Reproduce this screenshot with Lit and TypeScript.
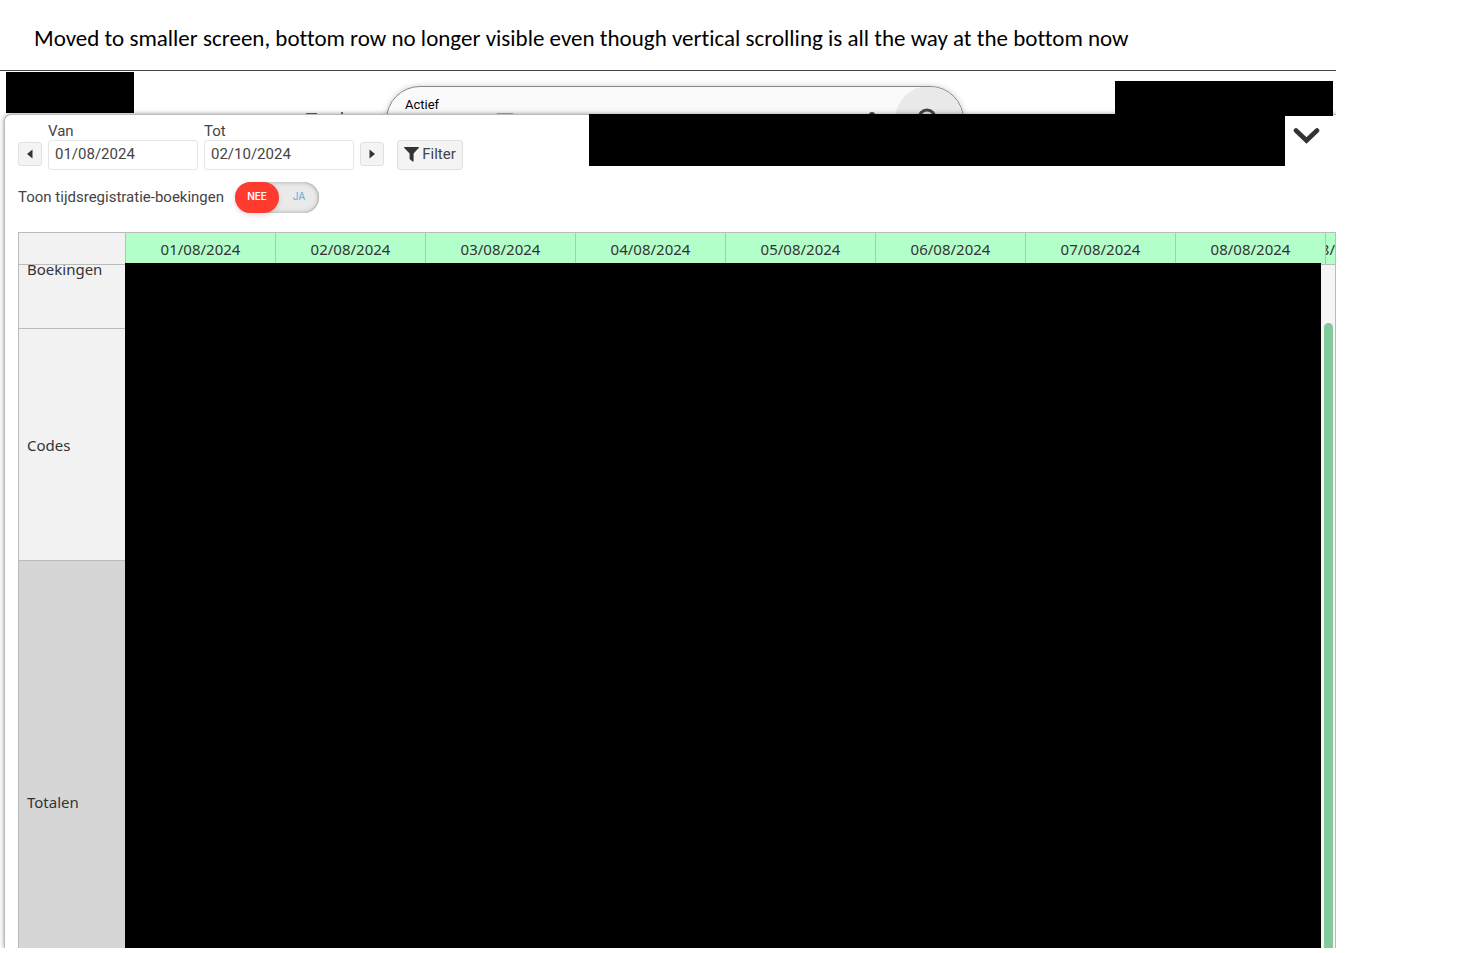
import { LitElement, html, css } from "lit";
import { customElement, property, state } from "lit/decorators.js";

@customElement("yes-no-switch")
class YesNoSwitch extends LitElement {
  @property({ type: Boolean }) checked = false;

  static styles = css`
    :host {
      display: block;
    }
    .row {
      display: flex;
      align-items: flex-start;
      gap: 11px;
      color: #444;
      font-size: 15px;
      line-height: 30px;
      cursor: pointer;
    }
    .switch {
      position: relative;
      display: grid;
      grid-template-columns: 44px 40px;
      align-items: center;
      height: 31px;
      border-radius: 16px;
      background: #eaeaea;
      box-shadow: inset 0 0 5px #aaa, inset -1px 0 1px #bbb;
      font-family: Inter, Roboto, sans-serif;
      font-size: 10px;
      font-weight: 500;
      text-align: center;
      color: #74b4dc;
    }
    .box {
      position: absolute;
      inset: 0;
      width: 100%;
      height: 100%;
      margin: 0;
      opacity: 0;
      cursor: pointer;
    }
    .side {
      line-height: 29px;
      height: 31px;
      border-radius: 16px;
    }
    .on {
      background: #ff3b30;
      color: #fff;
      font-weight: 600;
      box-shadow: 0 2px 5px rgba(0, 0, 0, 0.15);
    }
  `;

  render() {
    return html`
      <label class="row">
        <span><slot></slot></span>
        <span class="switch">
          <span class="side ${this.checked ? "" : "on"}">NEE</span>
          <span class="side ${this.checked ? "on" : ""}">JA</span>
          <input
            class="box"
            type="checkbox"
            aria-label="Toon tijdsregistratie-boekingen"
            .checked=${this.checked}
            @change=${(e: Event) => (this.checked = (e.target as HTMLInputElement).checked)}
          />
        </span>
      </label>
    `;
  }
}

@customElement("app-root")
class AppRoot extends LitElement {
  @state() private days = [1, 2, 3, 4, 5, 6, 7, 8].map((d) => `0${d}/08/2024`);

  static styles = css`
    :host {
      display: flex;
      flex-direction: column;
      box-sizing: border-box;
      height: 100vh;
      padding: 0 122px 5px 0;
      background: #fff;
      color: #333;
      font-family: Roboto, "Liberation Sans", sans-serif;
      overflow: hidden;
    }
    * {
      box-sizing: border-box;
    }
    .caption {
      margin: 0;
      padding: 22px 0 16px 34px;
      font: 400 23px/32px Carlito, Lato, sans-serif;
      font-variant-ligatures: none;
      color: #000;
      white-space: nowrap;
    }
    .capture {
      flex: 1;
      min-height: 0;
      display: flex;
      flex-direction: column;
      border-top: 1px solid #444;
      overflow: hidden;
    }
    .topbar {
      flex: none;
      display: flex;
      align-items: flex-start;
      height: 43px;
      padding: 1px 3px 0 6px;
    }
    .hidden {
      background: #000;
    }
    .brand {
      width: 128px;
      height: 41px;
    }
    .peek {
      display: block;
      width: 252px;
      height: 42px;
    }
    .search {
      display: flex;
      width: 578px;
      height: 68px;
      margin-top: 14px;
      border: 1px solid #888;
      border-radius: 34px;
      background: #fafafa;
      box-shadow: 0 0 6px rgba(0, 0, 0, 0.2);
      overflow: hidden;
    }
    .state {
      flex: 1;
      padding: 10px 0 0 18px;
      font-size: 13px;
      line-height: 16px;
      color: #000;
    }
    .glass {
      display: block;
      width: 468px;
      height: 66px;
    }
    .account {
      position: relative;
      z-index: 2;
      width: 218px;
      height: 35px;
      margin: 9px 0 0 auto;
    }
    .panel {
      position: relative;
      z-index: 1;
      flex: 1;
      min-height: 0;
      display: flex;
      flex-direction: column;
      margin-left: 4px;
      border: 1px solid #bbb;
      border-width: 1px 0 0 1px;
      border-radius: 7px 0 0 0;
      background: #fff;
      box-shadow: 0 0 5px rgba(0, 0, 0, 0.4);
    }
    .toolbar {
      display: flex;
      align-items: flex-start;
      padding-left: 13px;
      height: 66px;
    }
    .controls {
      display: flex;
      align-items: flex-end;
      gap: 6px;
      padding-top: 7px;
      color: #444;
      font-size: 15px;
    }
    .field {
      display: flex;
      flex-direction: column;
      line-height: 18px;
    }
    .date {
      width: 150px;
      height: 30px;
      padding: 0 6px 2px;
      border: 1px solid #e6e6e6;
      border-radius: 3px;
      background: #fff;
      color: #444;
      font: inherit;
    }
    .step,
    .filter {
      display: flex;
      align-items: center;
      justify-content: center;
      padding: 0;
      border: 1px solid #e0e0e0;
      border-radius: 3px;
      background: #f4f4f4;
      color: #444;
      font: inherit;
    }
    .step {
      width: 24px;
      height: 24px;
      margin-bottom: 4px;
    }
    .filter {
      gap: 3px;
      width: 66px;
      height: 30px;
      margin-left: 7px;
      padding-bottom: 2px;
    }
    .details {
      flex: 1;
      height: 52px;
      margin: -1px 0 0 126px;
    }
    .collapse {
      width: 51px;
      height: 41px;
      padding: 0 0 0 8px;
      border: 0;
      background: none;
      text-align: left;
    }
    .collapse svg {
      display: block;
    }
    .option {
      display: flex;
      padding: 1px 0 0 13px;
      margin-bottom: 19px;
    }
    .planning {
      flex: 1;
      min-height: 0;
      display: block;
      margin-left: 13px;
      border: 1px solid #bbb;
      border-bottom: 0;
      overflow: hidden;
      font: 400 15px/20px "Noto Sans", "Open Sans", sans-serif;
    }
    thead {
      display: block;
    }
    .days {
      display: flex;
      height: 32px;
      border-bottom: 1px solid #bbb;
      background: #b3ffc9;
    }
    .corner {
      flex: none;
      width: 106px;
      background: #f2f2f2;
    }
    .day {
      flex: none;
      width: 150px;
      padding: 6px 0 0;
      border-left: 1px solid #a9c9b3;
      font-weight: 400;
      text-align: center;
    }
    .rest {
      flex: 1;
      display: flex;
      justify-content: flex-end;
      min-width: 0;
      overflow: hidden;
    }
    tbody {
      display: grid;
      grid-template-columns: 106px 1fr 14px;
      grid-template-rows: 64px 232px 482px;
    }
    .line {
      display: contents;
    }
    .name {
      grid-column: 1;
      display: flex;
      align-items: center;
      padding: 0 0 0 8px;
      border-bottom: 1px solid #bbb;
      background: #f2f2f2;
      font-weight: 400;
      overflow: hidden;
    }
    .cut {
      align-items: flex-start;
      line-height: 8px;
    }
    .total {
      background: #d6d6d6;
    }
    .bookings {
      grid-area: 1 / 2 / 4 / 3;
      position: relative;
      margin-top: -2px;
      padding: 0;
    }
    .track {
      grid-area: 1 / 3 / 4 / 4;
      padding: 58px 2px 0 3px;
      background: #f5f5f5;
    }
    .thumb {
      height: 100%;
      border-radius: 5px;
      background: #84c99c;
    }
  `;

  render() {
    return html`
      <p class="caption">
        Moved to smaller screen, bottom row no longer visible even though vertical scrolling is all the way at the
        bottom now
      </p>
      <div class="capture">
        <header class="topbar">
          <div class="hidden brand"></div>
          <svg class="peek" viewBox="0 0 252 42" aria-hidden="true">
            <path d="M172 41h11v1h-11zM207 40h2v2h-2z" fill="#666" />
          </svg>
          <div class="search">
            <span class="state">Actief</span>
            <svg class="glass" viewBox="0 0 468 66" aria-hidden="true">
              <rect x="1" y="26" width="18" height="20" rx="2" fill="#84c99c" />
              <circle cx="434" cy="33" r="34" fill="#e9e9e9" />
              <circle cx="377" cy="28" r="3" fill="#444" />
              <circle cx="432" cy="31" r="8" fill="none" stroke="#444" stroke-width="3" />
            </svg>
          </div>
          <div class="hidden account"></div>
        </header>

        <main class="panel">
          <div class="toolbar">
            <div class="controls">
              <button class="step" aria-label="Vorige">
                <svg width="8" height="10" viewBox="0 0 8 10"><path d="M6.5 0.5v9L1 5z" fill="#333" /></svg>
              </button>
              <label class="field">Van<input class="date" type="text" .value=${"01/08/2024"} /></label>
              <label class="field">Tot<input class="date" type="text" .value=${"02/10/2024"} /></label>
              <button class="step" aria-label="Volgende">
                <svg width="8" height="10" viewBox="0 0 8 10"><path d="M1.5 0.5v9L7 5z" fill="#333" /></svg>
              </button>
              <button class="filter">
                <svg width="15" height="15" viewBox="0 0 15 15">
                  <path d="M0.4 0h14.2q.6.5.1 1L9.6 6.6V14q-.3.8-1 .4L5.6 12V6.6L.3 1Q-.2.5.4 0z" fill="#333" />
                </svg>
                Filter
              </button>
            </div>
            <div class="hidden details"></div>
            <button class="collapse" aria-label="Inklappen">
              <svg width="27" height="17" viewBox="0 0 27 17">
                <path d="M3 3.5l10.5 10L24 3.5" fill="none" stroke="#333" stroke-width="4.6" stroke-linecap="round" />
              </svg>
            </button>
          </div>
          <div class="option">
            <yes-no-switch>Toon tijdsregistratie-boekingen</yes-no-switch>
          </div>
          <table class="planning">
            <thead>
              <tr class="days">
                <td class="corner"></td>
                ${this.days.map((d) => html`<th class="day" scope="col">${d}</th>`)}
                <th class="day rest" scope="col">8/</th>
              </tr>
            </thead>
            <tbody>
              <tr class="line">
                <th class="name cut" scope="row">Boekingen</th>
                <td class="hidden bookings"></td>
                <td class="track"><div class="thumb"></div></td>
              </tr>
              <tr class="line">
                <th class="name" scope="row">Codes</th>
              </tr>
              <tr class="line">
                <th class="name total" scope="row">Totalen</th>
              </tr>
            </tbody>
          </table>
        </main>
      </div>
    `;
  }
}
